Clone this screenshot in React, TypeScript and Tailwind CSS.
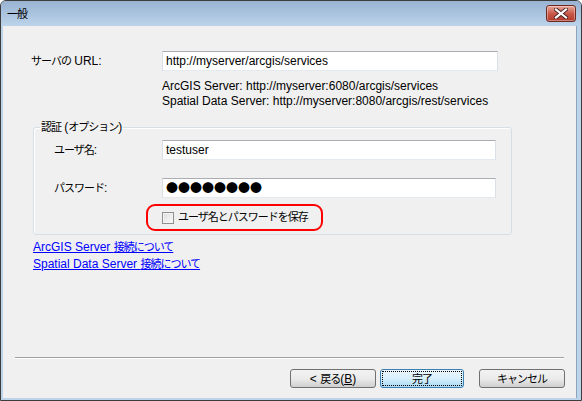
import React from "react";

const ui = "font-['Liberation_Sans','Noto_Sans_CJK_JP',sans-serif] text-[12px]";

const inputCls =
    "h-[20px] bg-white border border-t-[#abadb3] border-x-[#dbdfe6] border-b-[#e3e9ef] pl-[3px] flex items-center";

// narrow Japanese run, close to the width of MS UI Gothic kana
function J({ children }: { children: React.ReactNode }) {
    return <span className="text-[11px] tracking-[-1px]">{children}</span>;
}

function WinButton({ children, primary }: { children: React.ReactNode; primary?: boolean }) {
    return (
        <button
            type="button"
            className={
                primary
                    ? "w-[84px] h-[19px] rounded-[3px] border border-[#3c7fb1] bg-gradient-to-b from-[#eaf6fd] via-[#d9f0fc] to-[#a7d9f5] text-black leading-none outline-1 outline-dotted outline-black outline-offset-[-3px]"
                    : "w-[86px] h-[19px] rounded-[3px] border border-[#707070] bg-gradient-to-b from-[#f2f2f2] via-[#ebebeb] to-[#cfcfcf] text-black leading-none"
            }
        >
            {children}
        </button>
    );
}

export default function App() {
    return (
        <div className={`${ui} w-[582px] h-[401px] overflow-hidden flex flex-col bg-[#bcd3ea] border border-[#3c3c3c] rounded-t-[6px] text-black`}>
            {/* title bar */}
            <div className="h-[25px] shrink-0 flex items-start bg-gradient-to-b from-[#99b3d2] to-[#bcd3ea] pl-[6px] pr-[5px]">
                <span className="mt-[6px] leading-[15px] text-black"><J>一般</J></span>
                <div className="ml-auto mt-[4px] w-[30px] h-[17px] rounded-[3px] border border-[#6e2a20] bg-gradient-to-b from-[#e8a89c] via-[#c9594a] to-[#b23a2a] flex items-center justify-center shadow-[inset_0_0_0_1px_rgba(255,255,255,0.35)]">
                    <svg width="14" height="11" viewBox="0 0 14 11">
                        <path d="M2 1.5 L12 9.5 M12 1.5 L2 9.5" stroke="#4a2020" strokeWidth="4" strokeLinecap="square" />
                        <path d="M2 1.5 L12 9.5 M12 1.5 L2 9.5" stroke="#ffffff" strokeWidth="2.2" strokeLinecap="square" />
                    </svg>
                </div>
            </div>

            {/* client area */}
            <div className="flex-1 ml-[2px] mr-[4px] mb-[2px] bg-[#f0f0f0] border-r border-[#8da4bf] flex flex-col">
                <div className="pl-[28px] pt-[25px]">
                    <div className="flex items-center h-[20px]">
                        <span className="w-[131px]"><J>サーバの</J> URL:</span>
                        <div className={`${inputCls} w-[336px]`}>http://myserver/arcgis/services</div>
                    </div>
                    <div className="ml-[131px] mt-[8px] leading-[15px]">
                        <div>ArcGIS Server: http://myserver:6080/arcgis/services</div>
                        <div>Spatial Data Server: http://myserver:8080/arcgis/rest/services</div>
                    </div>

                    <fieldset className="ml-[2px] mt-[11px] w-[479px] border border-[#d5dfe5] rounded-[3px] shadow-[inset_1px_1px_0_#ffffff]">
                        <legend className="ml-[6px] px-[1px] leading-[15px]"><J>認証</J> (<J>オプション</J>)</legend>
                        <div className="pl-[20px] pt-[5px] pb-[3px]">
                            <div className="flex items-center h-[20px]">
                                <span className="w-[108px]"><J>ユーザ名</J>:</span>
                                <div className={`${inputCls} w-[334px]`}>testuser</div>
                            </div>
                            <div className="flex items-center h-[20px] mt-[18px]">
                                <span className="w-[108px]"><J>パスワード</J>:</span>
                                <div className={`${inputCls} w-[334px] font-['Noto_Sans_CJK_JP',sans-serif] text-[12px]`}>
                                    ●●●●●●●●
                                </div>
                            </div>
                            <div className="ml-[92px] mt-[6px] w-[177px] h-[27px] border-2 border-[#ff0000] rounded-[9px] flex items-center pl-[14px]">
                                <span className="shrink-0 w-[12px] h-[12px] border border-[#8f8f8f] bg-gradient-to-br from-[#dcdcdc] to-[#fbfbfb] shadow-[inset_0_0_0_1px_#f4f4f4]" />
                                <span className="ml-[4px] leading-[15px] whitespace-nowrap"><J>ユーザ名とパスワードを保存</J></span>
                            </div>
                        </div>
                    </fieldset>

                    <div className="ml-[2px] mt-[4px] leading-[17px] text-[#0000ff] underline">
                        <div>ArcGIS Server <J>接続について</J></div>
                        <div>Spatial Data Server <J>接続について</J></div>
                    </div>
                </div>

                <div className="mt-auto pb-[10px]">
                    <div className="mx-[12px] border-t border-[#a0a0a0] border-b border-b-white" />
                    <div className="mt-[10px] pr-[11px] flex justify-end">
                        <WinButton>
                            &lt; <J>戻る</J>(<span className="underline">B</span>)
                        </WinButton>
                        <div className="ml-[4px]">
                            <WinButton primary><J>完了</J></WinButton>
                        </div>
                        <div className="ml-[15px]">
                            <WinButton><J>キャンセル</J></WinButton>
                        </div>
                    </div>
                </div>
            </div>
        </div>
    );
}
